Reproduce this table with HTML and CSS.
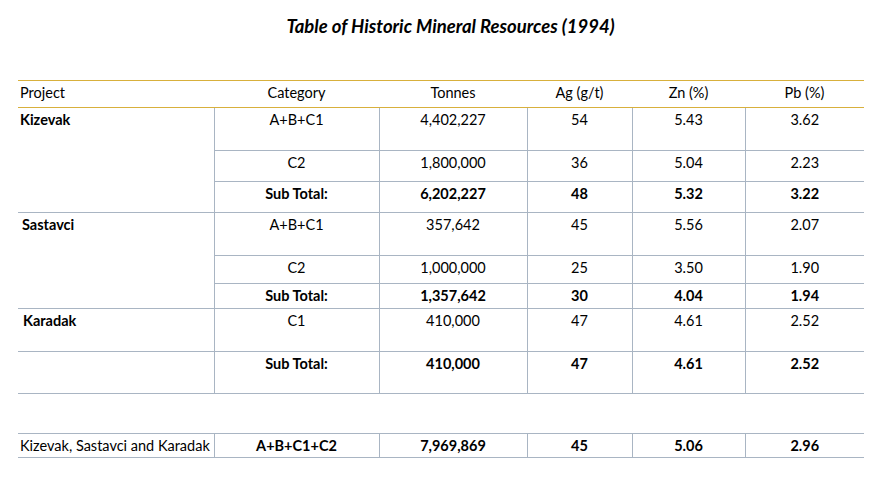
FILE: index.html
```html
<!DOCTYPE html>
<html lang="en">
<head>
<meta charset="utf-8">
<title>Table of Historic Mineral Resources (1994)</title>
<link rel="stylesheet" href="styles.css">
</head>
<body>
<div class="page">
  <h1 class="title">Table of Historic Mineral Resources (1994)</h1>
  <table class="res">
    <colgroup>
      <col class="c-proj"><col class="c-cat"><col class="c-ton"><col class="c-ag"><col class="c-zn"><col class="c-pb">
    </colgroup>
    <thead>
      <tr class="head">
        <th class="proj">Project</th><th>Category</th><th>Tonnes</th><th>Ag (g/t)</th><th>Zn (%)</th><th>Pb (%)</th>
      </tr>
    </thead>
    <tbody>
      <tr class="h43">
        <td class="proj name" rowspan="3">Kizevak</td><td>A+B+C1</td><td>4,402,227</td><td>54</td><td>5.43</td><td>3.62</td>
      </tr>
      <tr class="h31"><td>C2</td><td>1,800,000</td><td>36</td><td>5.04</td><td>2.23</td></tr>
      <tr class="h31 sub"><td>Sub Total:</td><td>6,202,227</td><td>48</td><td>5.32</td><td>3.22</td></tr>
      <tr class="h43">
        <td class="proj name ind4" rowspan="3">Sastavci</td><td>A+B+C1</td><td>357,642</td><td>45</td><td>5.56</td><td>2.07</td>
      </tr>
      <tr class="h28"><td>C2</td><td>1,000,000</td><td>25</td><td>3.50</td><td>1.90</td></tr>
      <tr class="h25 sub"><td>Sub Total:</td><td>1,357,642</td><td>30</td><td>4.04</td><td>1.94</td></tr>
      <tr class="h43">
        <td class="proj name ind5">Karadak</td><td>C1</td><td>410,000</td><td>47</td><td>4.61</td><td>2.52</td>
      </tr>
      <tr class="h42 sub"><td class="proj"></td><td>Sub Total:</td><td>410,000</td><td>47</td><td>4.61</td><td>2.52</td></tr>
      <tr class="gap"><td colspan="6"></td></tr>
      <tr class="h24 sub total">
        <td class="proj">Kizevak, Sastavci and Karadak</td><td>A+B+C1+C2</td><td>7,969,869</td><td>45</td><td>5.06</td><td>2.96</td>
      </tr>
    </tbody>
  </table>
</div>
</body>
</html>
```

FILE: styles.css
```css
html, body {
  margin: 0;
  padding: 0;
  background: #ffffff;
}

body {
  font-family: "Lato", "Open Sans", sans-serif;
  color: #000000;
  font-size: 14.5px;
}

.page {
  width: 886px;
  height: 480px;
  padding: 16px 0 0 18px;
  box-sizing: border-box;
}

.title {
  margin: 0 0 43px 0;
  width: 865px;
  text-align: center;
  font-size: 18.5px;
  line-height: 21px;
  font-weight: 700;
  font-style: italic;
}

.res {
  width: 846px;
  table-layout: fixed;
  border-collapse: collapse;
  border-spacing: 0;
}

.c-proj { width: 196px; }
.c-cat { width: 165px; }
.c-ton { width: 148px; }
.c-ag { width: 105px; }
.c-zn { width: 113px; }
.c-pb { width: 119px; }

.res th,
.res td {
  box-sizing: border-box;
  padding: 3px 2px 0 2px;
  vertical-align: top;
  text-align: center;
  line-height: 18px;
  white-space: nowrap;
  border: 1px solid #a9b5c3;
  border-top: 0;
  border-left: 1px solid #a9b5c3;
  border-right: 1px solid #a9b5c3;
}

.res th {
  font-weight: 400;
  border-top: 1px solid #d8b03c;
  border-bottom: 1px solid #d8b03c;
  border-left: 0;
  border-right: 0;
  height: 27px;
}

.res .proj {
  text-align: left;
  border-left: 0;
}

.res tr > :last-child {
  border-right: 0;
}

.res td.name {
  font-weight: 700;
}

.res td.ind4 { padding-left: 4px; }
.res td.ind5 { padding-left: 5px; }

.h43 td { height: 43px; }
.h42 td { height: 42px; }
.h31 td { height: 31px; }
.h28 td { height: 28px; }
.h25 td { height: 25px; }
.h24 td { height: 24px; }

.sub td {
  font-weight: 700;
}

.total td.proj {
  font-weight: 400;
}

.gap td {
  height: 40px;
  border-left: 0;
  border-right: 0;
}
```
